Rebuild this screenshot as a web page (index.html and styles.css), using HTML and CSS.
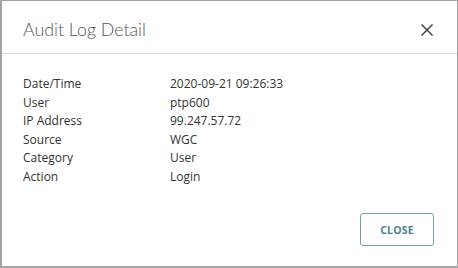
FILE: index.html
```html
<!DOCTYPE html>
<html lang="en">
<head>
  <meta charset="UTF-8">
  <title>Audit Log Detail</title>
  <link rel="stylesheet" href="styles.css">
</head>
<body>
  <div class="dialog">
    <div class="dialog-header">
      <div class="dialog-title">Audit Log Detail</div>
      <button class="close-x" aria-label="close">
        <svg width="12" height="12" viewBox="0 0 12 12">
          <path d="M0.5 0.5 L11.5 11.5 M11.5 0.5 L0.5 11.5" stroke="#444" stroke-width="1.5" fill="none"/>
        </svg>
      </button>
    </div>

    <div class="dialog-body">
      <div class="detail-row"><span class="label">Date/Time</span><span class="value">2020-09-21 09:26:33</span></div>
      <div class="detail-row"><span class="label">User</span><span class="value">ptp600</span></div>
      <div class="detail-row"><span class="label">IP Address</span><span class="value">99.247.57.72</span></div>
      <div class="detail-row"><span class="label">Source</span><span class="value">WGC</span></div>
      <div class="detail-row"><span class="label">Category</span><span class="value">User</span></div>
      <div class="detail-row"><span class="label">Action</span><span class="value">Login</span></div>
    </div>

    <div class="dialog-footer">
      <button class="btn-close">CLOSE</button>
    </div>
  </div>
</body>
</html>
```

FILE: styles.css
```css
* {
  margin: 0;
  padding: 0;
  box-sizing: border-box;
}

html, body {
  width: 458px;
  height: 268px;
  background: #fff;
  overflow: hidden;
}

.dialog {
  width: 458px;
  height: 268px;
  border: 1px solid #a3a3a3;
  border-left-width: 2px;
  border-bottom-width: 2px;
  display: flex;
  flex-direction: column;
  font-family: "Open Sans", sans-serif;
  color: #333;
}

.dialog-header {
  height: 53px;
  border-bottom: 1px solid #dcdcdc;
  display: flex;
  align-items: center;
  justify-content: space-between;
  padding: 0 24px 0 21px;
}

.dialog-title {
  font-family: "Lato", sans-serif;
  font-weight: 300;
  font-size: 17.8px;
  color: #555;
  margin-top: 3px;
}

.close-x {
  border: none;
  background: none;
  width: 12px;
  height: 12px;
  display: flex;
  margin-top: 5px;
  cursor: pointer;
}

.dialog-body {
  padding: 21px 0 0 21px;
  font-size: 12px;
}

.detail-row {
  display: flex;
  line-height: 18.6px;
}

.label {
  width: 147px;
}

.dialog-footer {
  margin-top: auto;
  display: flex;
  justify-content: flex-end;
  padding: 0 23px 20px 0;
}

.btn-close {
  width: 74px;
  height: 33px;
  border: 1.5px solid #6fa1ad;
  border-radius: 3px;
  background: #fff;
  font-family: "Open Sans", sans-serif;
  font-weight: 700;
  font-size: 10.5px;
  color: #4f8090;
  letter-spacing: 0.2px;
}
```
